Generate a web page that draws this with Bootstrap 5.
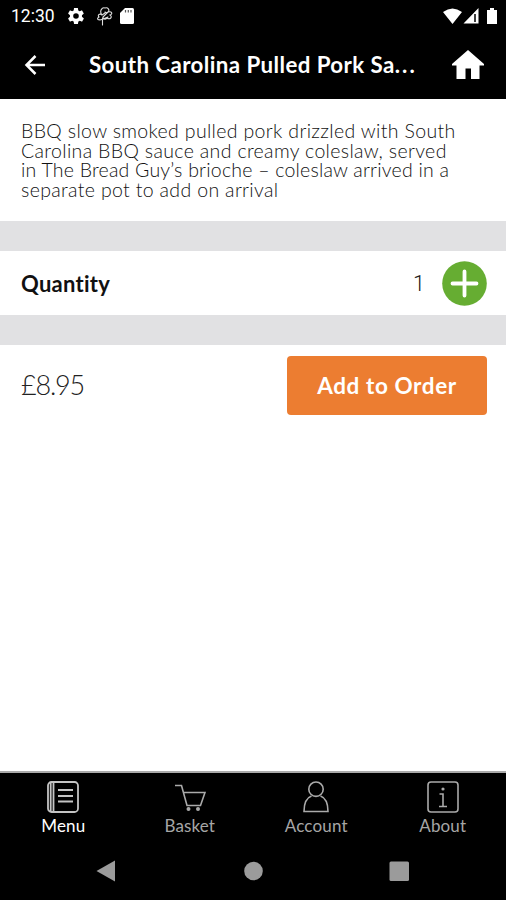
<!DOCTYPE html>
<html lang="en">
<head>
<meta charset="utf-8">
<meta name="viewport" content="width=device-width, initial-scale=1">
<title>South Carolina Pulled Pork Sandwich</title>
<link href="https://cdn.jsdelivr.net/npm/bootstrap@5.3.0/dist/css/bootstrap.min.css" rel="stylesheet">
<style>
body{font-family:Lato,"Liberation Sans",sans-serif;width:506px;height:900px;overflow:hidden}
svg{display:block;flex:none}
.statusbar{height:32px;padding:0 8px 0 11px;font:400 17.5px/32px Roboto,sans-serif}
.clock{width:57px;white-space:nowrap}
.titlebar{height:67px;padding:0 22px 2px 24px}
.title-text{font-size:22.3px;font-weight:700;line-height:28px;margin-left:43px;width:346px;white-space:nowrap;letter-spacing:.41px}
.dots{letter-spacing:2.1px}
.desc{height:122px;padding:22px 20px 0 21px;font-size:19.5px;font-weight:300;line-height:19.7px;color:#111}
.desc span{display:block;white-space:nowrap;letter-spacing:.345px}
.desc span.snug{letter-spacing:.22px}
.gap-band{height:30px;background:#e1e1e3}
.qty{height:64px;padding:0 19px 0 21px;color:#111}
.qty-label{font-size:22px;font-weight:700;letter-spacing:.25px}
.qty-num{font:300 21.5px Roboto,sans-serif;margin-right:17px;color:#222}
.order{height:81px;padding:0 19px 0 21px}
.price{font-size:27px;font-weight:300;color:#222;letter-spacing:-1.2px}
.btn-order{width:200px;height:59px;border-radius:4px;background:#ec7d31;color:#fff;font-size:22.5px;font-weight:700;padding:0;letter-spacing:.6px}
.tabs{height:73px;border-top:2px solid #aaa;color:#a6a6a6;font-size:17px;line-height:20px;letter-spacing:.15px}
.tab{width:126.5px;padding-top:8px}
.tab svg{margin-bottom:3px}
.sysnav{height:56px}
</style>
</head>
<body class="bg-white d-flex flex-column m-0">
<header class="bg-black text-white">
  <div class="statusbar d-flex align-items-center">
    <span class="clock">12:30</span>
    <svg width="16" height="16" viewBox="2 2 20 20" fill="#fff"><path d="M19.4 13c0-.3.1-.7.1-1s0-.7-.1-1l2.1-1.700c.2-.1.200-.4.100-.6l-2-3.500c-.1-.2-.4-.3-.6-.2l-2.500 1c-.5-.4-1.100-.7-1.700-1l-.4-2.600C14.400 2.200 14.200 2 14 2h-4c-.3 0-.5.2-.5.400L9.100 5c-.6.300-1.200.6-1.700 1l-2.500-1c-.2-.1-.5 0-.6.2l-2 3.500c-.1.200-.1.500.1.600L4.500 11c0 .300-.1.700-.1 1s0 .7.100 1l-2.100 1.700c-.2.100-.2.400-.1.600l2 3.500c.1.200.4.300.6.200l2.500-1c.5.400 1.100.7 1.700 1l.4 2.600c0 .2.200.4.500.4h4c.2 0 .5-.2.500-.4l.4-2.600c.6-.3 1.200-.6 1.700-1l2.500 1c.2.100.5 0 .6-.2l2-3.500c.1-.2.100-.5-.1-.6zM12 15.500a3.500 3.500 0 1 1 0-7 3.500 3.500 0 0 1 0 7z"/></svg>
    <svg class="ms-2 ps-1" width="24" height="19" viewBox="0 0 20 19" fill="none" stroke="#ddd" stroke-width="1.1" stroke-linecap="round"><path d="M6.500 18V11M7 12C2 14 0 12 3 10C1 8 4 6 6 8C3 4 6 0 9 1C12 0 14 3 12 5C16 4 17 7 14 8C17 10 14 13 11 11C9 13 7 12 7 10L12 5M6 8l3-2M9 5l2 1M7 12l5-2"/></svg>
    <svg class="ms-1" width="14" height="16" viewBox="0 0 14 16"><path fill="#fff" d="M5 0h7.500Q14 0 14 1.500v13Q14 16 12.500 16h-11Q0 16 0 14.500V5z"/><path stroke="#555" stroke-width="1.200" d="M5.500 2v2.500M8.300 2v2.500M11 2v2.500"/></svg>
    <svg class="ms-auto" width="55" height="17" viewBox="0 0 55 17"><path fill="#fff" d="M0 4Q9.500-3 19 4L9.500 16zM20.500 15.500 35.500 0v15.500zM44 2h3V0h4v2h3v14H44z"/><path stroke="#000" stroke-width="1.500" d="M32 6v8"/></svg>
  </div>
  <div class="titlebar d-flex align-items-center">
    <svg width="22" height="20" viewBox="0 0 22 20" fill="none" stroke="#fff" stroke-width="2.500"><path d="M21 10H3M11.500 1 2.500 10l9 9"/></svg>
    <div class="title-text">South Carolina Pulled Pork Sa<span class="dots">...</span></div>
    <svg class="ms-auto" width="32" height="29" viewBox="0 0 32 29" fill="#fff"><path d="M16 0 32 14v1.500h-4.500V29H19V18.500h-5.500V29H4.500V15.500H0V14z"/></svg>
  </div>
</header>
<main class="flex-grow-1">
  <div class="desc">
    <span>BBQ slow smoked pulled pork drizzled with South</span>
    <span>Carolina BBQ sauce and creamy coleslaw, served</span>
    <span class="snug">in The Bread Guy’s brioche – coleslaw arrived in a</span>
    <span>separate pot to add on arrival</span>
  </div>
  <div class="gap-band"></div>
  <div class="qty d-flex align-items-center">
    <span class="qty-label me-auto">Quantity</span>
    <span class="qty-num">1</span>
    <svg width="45" height="45" viewBox="0 0 45 45"><circle cx="22.500" cy="22.500" r="22.300" fill="#66ad32"/><path d="M10.500 22.500h24M22.500 10.500v24" stroke="#fff" stroke-width="3.800" stroke-linecap="round"/></svg>
  </div>
  <div class="gap-band"></div>
  <div class="order d-flex align-items-center justify-content-between">
    <span class="price">£8.95</span>
    <button class="btn btn-order" type="button">Add to Order</button>
  </div>
</main>
<footer class="bg-black">
  <nav class="tabs d-flex">
    <div class="tab d-flex flex-column align-items-center text-white">
      <svg width="32" height="32" viewBox="0 0 32 32" fill="none" stroke="#c4c4c4" stroke-width="1.800"><rect x="1" y="1" width="30" height="30" rx="3.500"/><path d="M3.700 2v28M6.500 2v28M11 9h15M11 15h15M11 20.500h15"/></svg>
      <span>Menu</span>
    </div>
    <div class="tab d-flex flex-column align-items-center">
      <svg width="32" height="32" viewBox="0 0 32 32" fill="none" stroke="#aaa" stroke-width="1.600"><path d="M1 4.500h6.500L13 24.500h13.500L31 11.500H9.500"/><circle cx="14.500" cy="28" r="1.200" fill="#aaa"/><circle cx="24" cy="28" r="1.200" fill="#aaa"/></svg>
      <span>Basket</span>
    </div>
    <div class="tab d-flex flex-column align-items-center">
      <svg width="32" height="32" viewBox="0 0 32 32" fill="none" stroke="#aaa" stroke-width="1.600"><circle cx="16" cy="8.200" r="7.200"/><path d="M11.500 15C6 17 4 22 4 30.500h24C28 22 26 17 20.500 15"/></svg>
      <span>Account</span>
    </div>
    <div class="tab d-flex flex-column align-items-center">
      <svg width="32" height="32" viewBox="0 0 32 32" fill="none" stroke="#aaa" stroke-width="1.600"><rect x="1" y="1" width="30" height="30" rx="3"/><path d="M12.500 13H16v12.500M12 25.500h8"/><circle cx="16" cy="8" r=".8" fill="#aaa"/></svg>
      <span>About</span>
    </div>
  </nav>
  <div class="sysnav">
    <svg width="506" height="56" viewBox="0 0 506 56" fill="#9b9b9b"><path d="M96.500 27 115 16.500v21z"/><circle cx="253.500" cy="27" r="9.300"/><rect x="389.500" y="17.500" width="19.500" height="19.500" rx="1.500"/></svg>
  </div>
</footer>
<script src="https://cdn.jsdelivr.net/npm/bootstrap@5.3.0/dist/js/bootstrap.bundle.min.js"></script>
</body>
</html>
